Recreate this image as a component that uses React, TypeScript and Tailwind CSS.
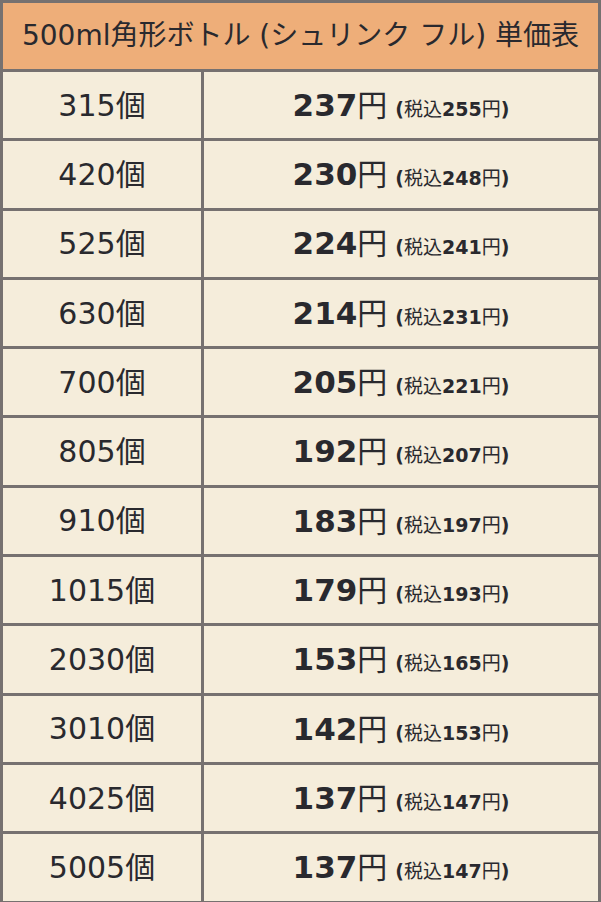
const rows = [
  { qty: "315", price: "237", tax: "255" },
  { qty: "420", price: "230", tax: "248" },
  { qty: "525", price: "224", tax: "241" },
  { qty: "630", price: "214", tax: "231" },
  { qty: "700", price: "205", tax: "221" },
  { qty: "805", price: "192", tax: "207" },
  { qty: "910", price: "183", tax: "197" },
  { qty: "1015", price: "179", tax: "193" },
  { qty: "2030", price: "153", tax: "165" },
  { qty: "3010", price: "142", tax: "153" },
  { qty: "4025", price: "137", tax: "147" },
  { qty: "5005", price: "137", tax: "147" },
];

export default function App() {
  return (
    <div
      className="w-[601px] h-[902px] overflow-hidden bg-[#f5eddb] text-[#29292e]"
      style={{ fontFamily: '"DejaVu Sans", "Noto Sans CJK JP", sans-serif' }}
    >
      <table className="w-full border-collapse border-[3px] border-[#767170] table-fixed">
        <colgroup>
          <col className="w-[201px]" />
          <col />
        </colgroup>
        <thead>
          <tr>
            <th
              colSpan={2}
              className="h-[69px] bg-[#eeae79] border-[3px] border-[#767170] text-[28px] font-normal text-center"
            >
              500ml角形ボトル (シュリンク フル) 単価表
            </th>
          </tr>
        </thead>
        <tbody>
          {rows.map((r) => (
            <tr key={r.qty} className="h-[69.3px]">
              <td className="border-[3px] border-[#767170] text-center text-[30px]">
                {r.qty}個
              </td>
              <td className="border-[3px] border-[#767170] text-center whitespace-nowrap">
                <span className="text-[31px] font-bold">{r.price}</span>
                <span className="text-[30px]">円</span>
                <span className="text-[19px] font-bold ml-[8px]">
                  (<span className="font-normal">税込</span>
                  {r.tax}
                  <span className="font-normal">円</span>)
                </span>
              </td>
            </tr>
          ))}
        </tbody>
      </table>
    </div>
  );
}
